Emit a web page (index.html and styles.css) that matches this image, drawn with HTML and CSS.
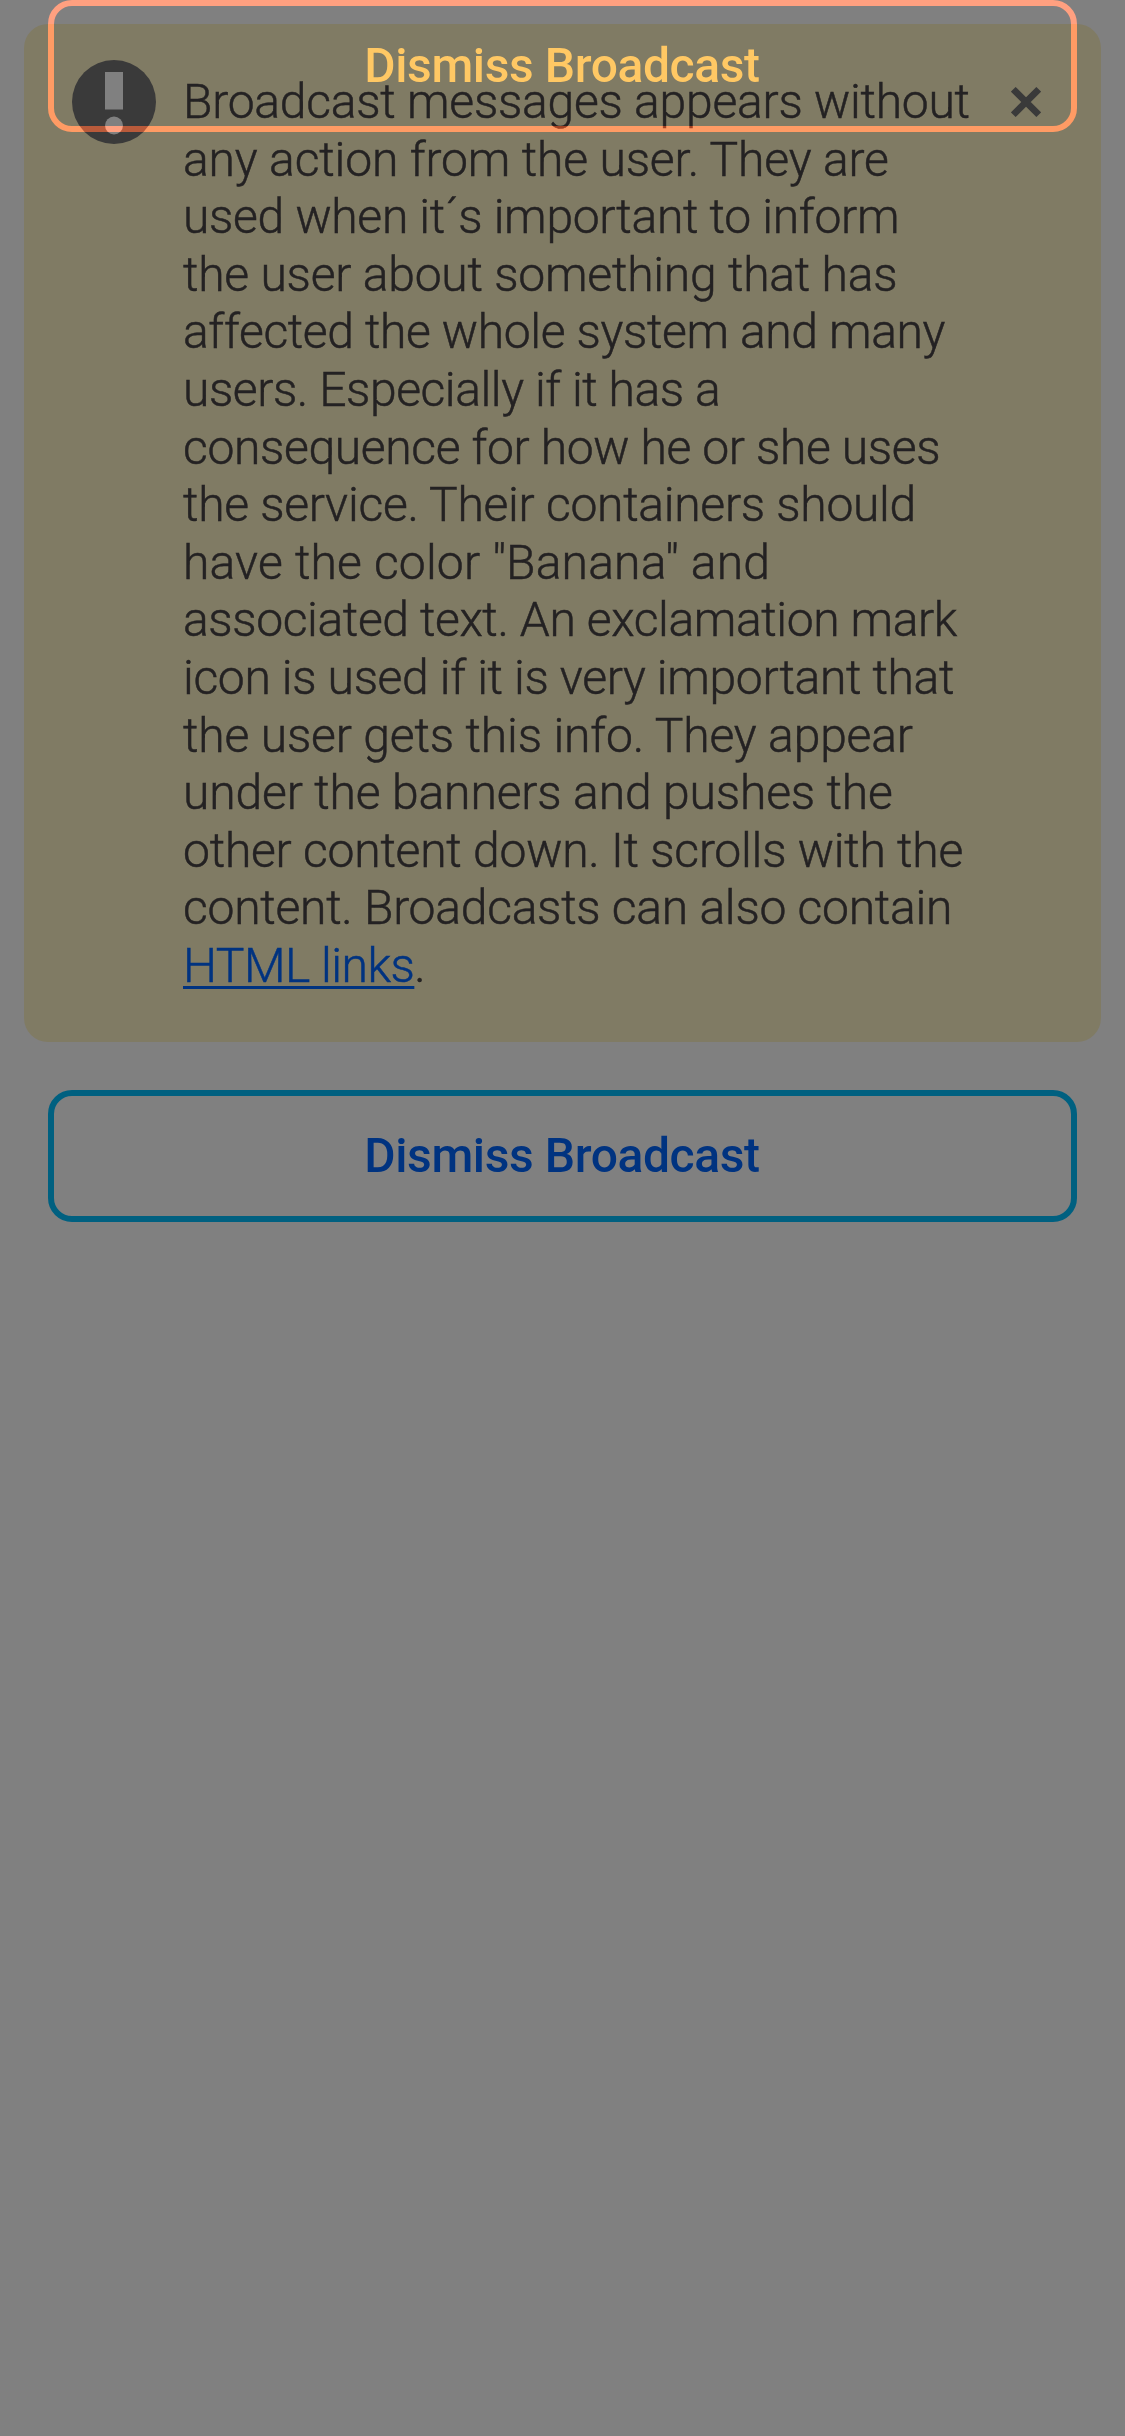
FILE: index.html
```html
<!DOCTYPE html>
<html lang="en">
<head>
<meta charset="utf-8">
<title>Broadcast</title>
<link rel="stylesheet" href="styles.css">
</head>
<body>
<main class="page">
  <section class="broadcast">
    <svg class="broadcast-icon" viewBox="0 0 84 84">
      <circle cx="42" cy="42" r="42" fill="#3a3a3a"/>
      <rect x="33" y="12" width="18" height="37.5" fill="#808080"/>
      <circle cx="42" cy="65.5" r="9" fill="#808080"/>
    </svg>
    <p class="message">
      <span class="line l1">Broadcast messages appears without</span>
      <span class="line l2">any action from the user. They are</span>
      <span class="line l3">used when it´s important to inform</span>
      <span class="line l4">the user about something that has</span>
      <span class="line l5">affected the whole system and many</span>
      <span class="line l6">users. Especially if it has a</span>
      <span class="line l7">consequence for how he or she uses</span>
      <span class="line l8">the service. Their containers should</span>
      <span class="line l9">have the color "Banana" and</span>
      <span class="line l10">associated text. An exclamation mark</span>
      <span class="line l11">icon is used if it is very important that</span>
      <span class="line l12">the user gets this info. They appear</span>
      <span class="line l13">under the banners and pushes the</span>
      <span class="line l14">other content down. It scrolls with the</span>
      <span class="line l15">content. Broadcasts can also contain</span>
      <span class="line l16"><a class="link" href="#">HTML links</a>.</span>
    </p>
    <svg class="close" viewBox="0 0 30 30">
      <path d="M2.3 2.3L27.7 27.7M27.7 2.3L2.3 27.7" stroke="#3a3a3a" stroke-width="6.6" fill="none"/>
    </svg>
  </section>
  <button class="button">Dismiss Broadcast</button>
  <button class="button button-floating">Dismiss Broadcast</button>
</main>
</body>
</html>
```
FILE: styles.css
```css
* { box-sizing: border-box; }

body {
  margin: 0;
  background: #808080;
  font-family: Roboto, "Open Sans", sans-serif;
}

.page {
  position: relative;
  display: flex;
  flex-direction: column;
  gap: 48px;
  width: 1125px;
  height: 2436px;
  padding: 24px;
  background: #808080;
  overflow: hidden;
}

.broadcast {
  display: flex;
  align-items: flex-start;
  height: 1018px;
  padding: 48px 60px 48px 48px;
  border-radius: 24px;
  background: #807b64;
}

.broadcast-icon {
  flex: none;
  width: 84px;
  height: 84px;
  margin-top: -12px;
}

.message {
  flex: 1;
  margin: 1px 0 0 27px;
  color: #242223;
  font-size: 48px;
  font-weight: 300;
  line-height: 57.6px;
  -webkit-text-stroke: 0.5px currentColor;
}

.line { display: block; white-space: nowrap; }

.l1 { letter-spacing: -0.24px; }
.l2 { letter-spacing: -0.15px; }
.l3 { letter-spacing: -0.3px; }
.l4 { letter-spacing: -0.22px; }
.l5 { letter-spacing: -0.36px; }
.l6 { letter-spacing: -0.43px; }
.l7 { letter-spacing: -0.36px; }
.l8 { letter-spacing: -0.28px; }
.l9 { letter-spacing: 0.17px; }
.l10 { letter-spacing: -0.39px; }
.l11 { letter-spacing: -0.34px; }
.l12 { letter-spacing: -0.15px; }
.l13 { letter-spacing: -0.14px; }
.l14 { letter-spacing: -0.23px; }
.l15 { letter-spacing: -0.26px; }
.l16 { letter-spacing: -0.5px; }

.link {
  color: #003380;
  text-decoration: underline;
  text-decoration-thickness: 3px;
  text-underline-offset: 4px;
  text-decoration-skip-ink: none;
}

.close {
  flex: none;
  width: 30px;
  height: 30px;
  margin-top: 15px;
}

.button {
  width: 1029px;
  height: 132px;
  margin: 0 24px;
  padding: 0 1px 0 0;
  border: 6px solid #006080;
  border-radius: 24px;
  background: none;
  color: #003380;
  font: 500 48px/57.6px Roboto, "Open Sans", sans-serif;
  letter-spacing: -0.4px;
}

/* Floating copy adds its light to whatever lies beneath it */
.button-floating {
  position: absolute;
  top: 0;
  left: 24px;
  border-color: #7f2000;
  color: #7f4d00;
  mix-blend-mode: plus-lighter;
}
```
